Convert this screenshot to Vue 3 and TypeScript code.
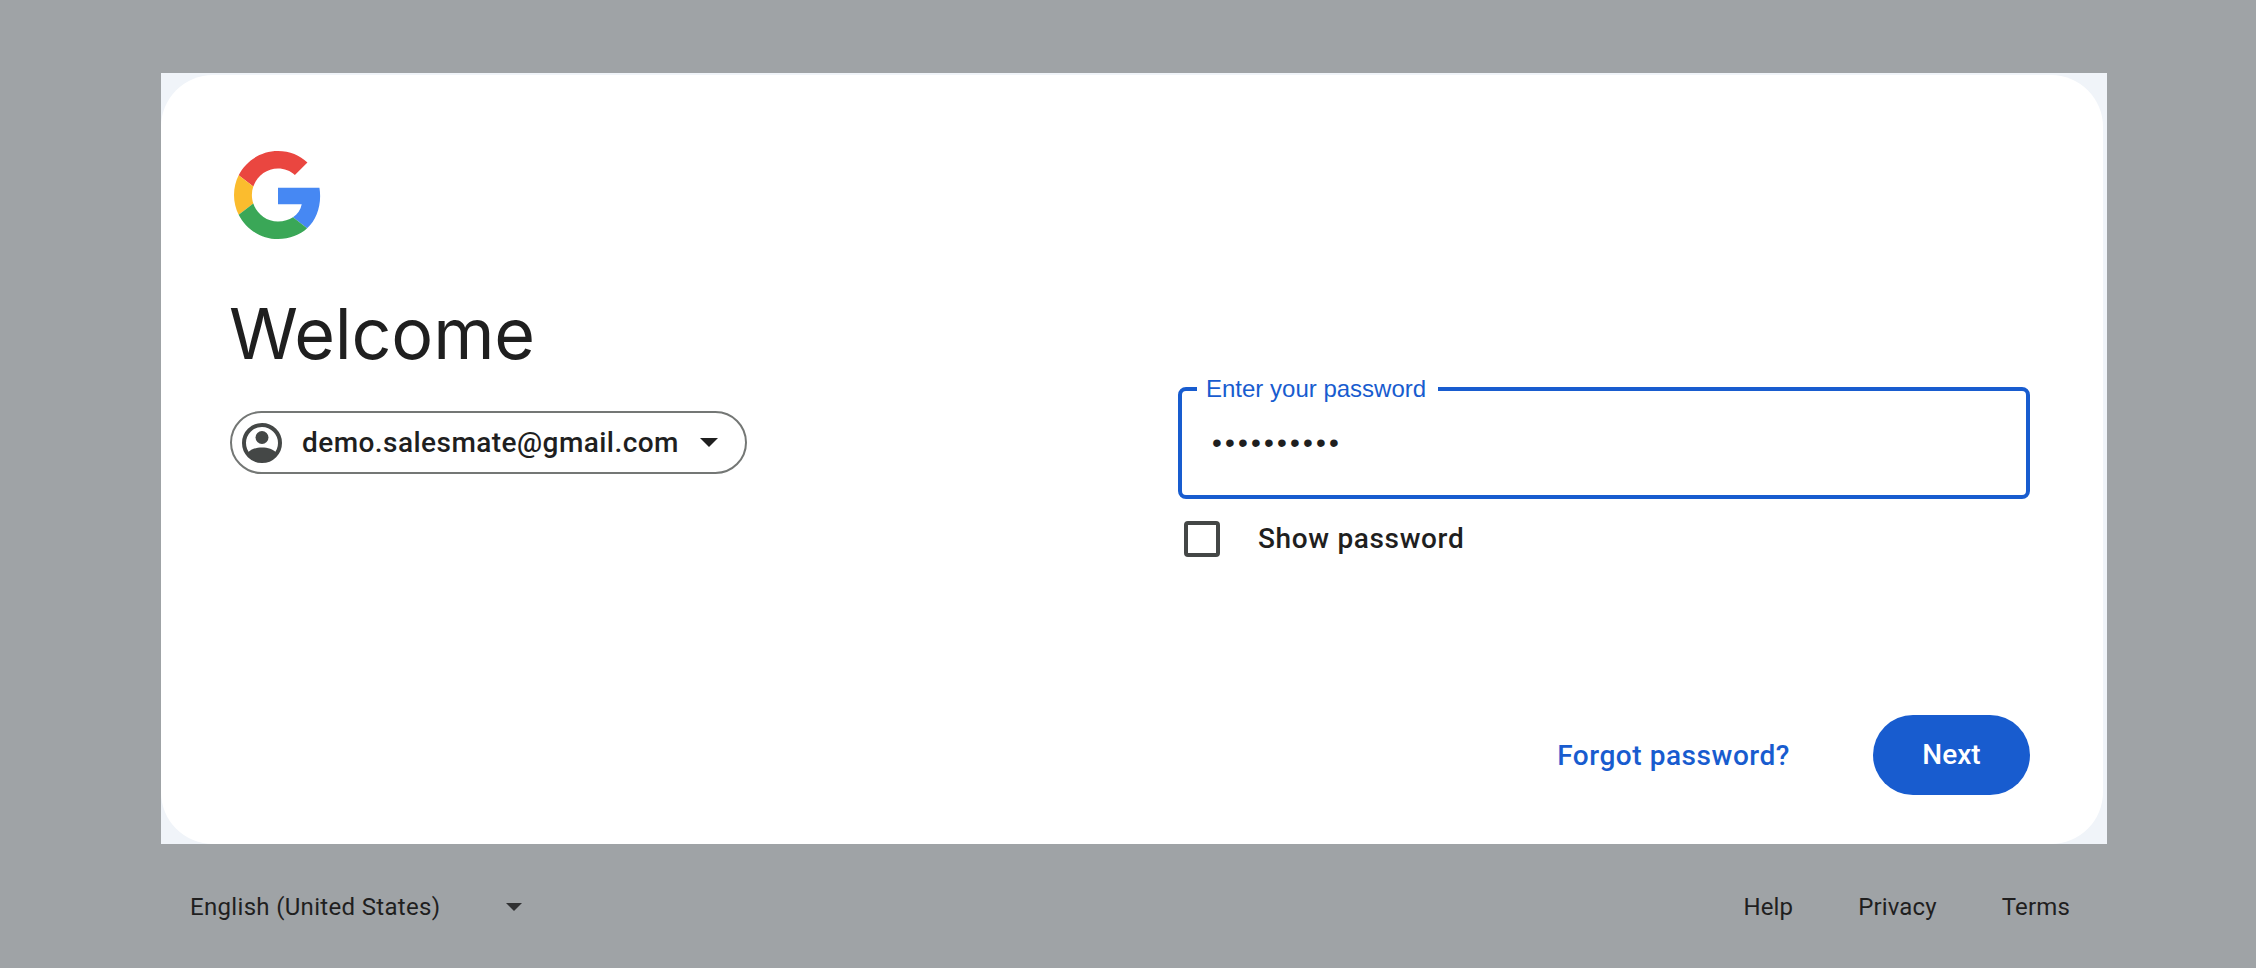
<template>
  <div class="page">
    <main class="frame">
      <div class="card">
        <section class="intro">
          <svg class="logo" viewBox="0 0 48 48" width="88" height="88" aria-label="Google">
            <path fill="#EA4640" d="M24 9.5c3.54 0 6.71 1.22 9.21 3.6l6.85-6.85C35.9 2.38 30.47 0 24 0 14.62 0 6.51 5.38 2.56 13.22l7.98 6.19C12.43 13.72 17.74 9.5 24 9.5z" />
            <path fill="#4688F3" d="M46.98 24.55c0-1.57-.15-3.09-.38-4.55H24v9.02h12.94c-.58 2.96-2.26 5.48-4.78 7.18l7.73 6c4.51-4.18 7.09-10.36 7.09-17.65z" />
            <path fill="#FBBC2E" d="M10.53 28.59c-.5-1.45-.78-2.99-.78-4.59s.27-3.14.78-4.59l-7.98-6.19C.92 16.46 0 20.12 0 24c0 3.88.92 7.54 2.56 10.78l7.97-6.19z" />
            <path fill="#3AA757" d="M24 48c6.48 0 11.93-2.13 15.89-5.81l-7.73-6c-2.15 1.45-4.92 2.3-8.16 2.3-6.26 0-11.57-4.22-13.47-9.91l-7.98 6.19C6.51 42.62 14.62 48 24 48z" />
          </svg>
          <h1>Welcome</h1>
          <button class="account" type="button">
            <svg class="avatar" viewBox="0 0 40 40" width="40" height="40">
              <circle cx="20" cy="20" r="18" fill="none" stroke="#444746" stroke-width="4" />
              <circle cx="20" cy="14.5" r="6.5" fill="#444746" />
              <path fill="#444746" d="M5.5 30C9 26 14 24.5 20 24.5S31 26 34.5 30C31 35.5 26 38 20 38S9 35.5 5.5 30z" />
            </svg>
            <span class="email">{{ email }}</span>
            <span class="caret"></span>
          </button>
        </section>

        <section class="form">
          <div class="field">
            <label for="pw">Enter your password</label>
            <input id="pw" type="password" :value="password" readonly />
          </div>
          <label class="show">
            <span class="box"></span>
            <span>Show password</span>
          </label>
          <div class="actions">
            <a class="forgot" href="#">Forgot password?</a>
            <button class="next" type="button"><span>Next</span></button>
          </div>
        </section>
      </div>
    </main>

    <footer class="footer">
      <div class="lang">
        <span>English (United States)</span>
        <span class="caret small"></span>
      </div>
      <nav class="links">
        <a v-for="link in links" :key="link" href="#">{{ link }}</a>
      </nav>
    </footer>
  </div>
</template>

<script setup lang="ts">
const email = 'demo.salesmate@gmail.com'
const password = 'salesmate1'
const links: string[] = ['Help', 'Privacy', 'Terms']
</script>

<style>
body {
  background: #9fa3a6;
}
</style>

<style scoped>
.page {
  box-sizing: border-box;
  width: 1946px;
  height: 968px;
  margin-left: 161px;
  padding-top: 73px;
  font-family: Roboto, "Liberation Sans", sans-serif;
  color: #1f1f1f;
}

.frame {
  background: #f0f4f9;
  padding: 2px 4px 0 0;
}

.card {
  box-sizing: border-box;
  height: 769px;
  display: grid;
  grid-template-columns: 948px 852px;
  padding: 76px 73px 49px 69px;
  background: #fff;
  border-radius: 52px;
}

.logo {
  display: block;
  margin-left: 4px;
}

h1 {
  margin: 49px 0 31px -1px;
  font-family: Inter, Roboto, sans-serif;
  font-size: 70px;
  font-weight: 400;
  line-height: 92px;
  letter-spacing: -0.2px;
}

.account {
  box-sizing: border-box;
  display: flex;
  align-items: center;
  width: 517px;
  height: 63px;
  padding: 0 0 0 10px;
  background: #fff;
  border: 2px solid #747775;
  border-radius: 32px;
  font: inherit;
  color: inherit;
}

.email {
  margin-left: 20px;
  font-size: 28px;
  font-weight: 500;
  letter-spacing: 0.45px;
}

.caret {
  width: 0;
  height: 0;
  margin-left: 21px;
  border-left: 9px solid transparent;
  border-right: 9px solid transparent;
  border-top: 9px solid #1f1f1f;
}

.form {
  display: flex;
  flex-direction: column;
  padding-top: 236px;
}

.field {
  position: relative;
  box-sizing: border-box;
  height: 112px;
  border: 4px solid #185ccf;
  border-radius: 8px;
}

.field label {
  position: absolute;
  top: -16px;
  left: 15px;
  padding: 0 12px 0 9px;
  background: #fff;
  color: #185ccf;
  font-family: "Liberation Sans", sans-serif;
  font-size: 24px;
  line-height: 28px;
}

.field input {
  width: 100%;
  height: 100%;
  box-sizing: border-box;
  padding: 0 0 0 30px;
  border: none;
  outline: none;
  background: transparent;
  color: #1f1f1f;
  font-family: "Liberation Sans", sans-serif;
  font-size: 28px;
  letter-spacing: 3.2px;
}

.show {
  display: flex;
  align-items: center;
  gap: 38px;
  margin: 22px 0 0 6px;
  font-size: 28px;
  font-weight: 500;
  line-height: 36px;
  letter-spacing: 0.65px;
}

.box {
  box-sizing: border-box;
  width: 36px;
  height: 36px;
  border: 4px solid #444746;
  border-radius: 4px;
}

.actions {
  display: flex;
  align-items: center;
  justify-content: flex-end;
  gap: 83px;
  margin-top: auto;
}

.forgot {
  color: #185ccf;
  font-size: 28px;
  font-weight: 500;
  letter-spacing: 0.55px;
  text-decoration: none;
}

.next {
  width: 157px;
  height: 80px;
  padding: 0 0 2px;
  border: none;
  border-radius: 40px;
  background: #185ccf;
  color: #fff;
  font: inherit;
  font-size: 28px;
  font-weight: 500;
}

.footer {
  display: flex;
  justify-content: space-between;
  align-items: center;
  height: 40px;
  margin-top: 43px;
  padding: 0 37px 0 29px;
  font-size: 24px;
}

.lang {
  display: flex;
  align-items: center;
  letter-spacing: 0.32px;
}

.caret.small {
  margin-left: 66px;
  border-left-width: 8px;
  border-right-width: 8px;
  border-top-width: 8px;
  border-top-color: #303132;
}

.links {
  display: flex;
  gap: 65px;
  letter-spacing: 0.15px;
}

.links a {
  color: #1f1f1f;
  text-decoration: none;
}
</style>
